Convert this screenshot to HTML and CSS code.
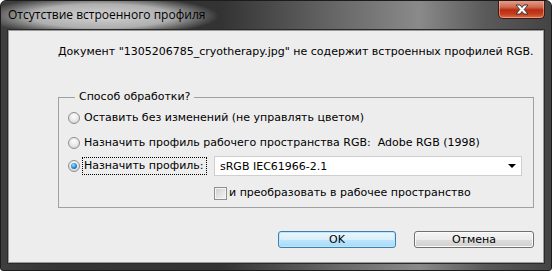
FILE: index.html
```html
<!DOCTYPE html>
<html lang="ru">
<head>
<meta charset="utf-8">
<title>Отсутствие встроенного профиля</title>
<link rel="stylesheet" href="styles.css">
</head>
<body>
<div class="window">
  <div class="titlebar">
    <span class="title">Отсутствие встроенного профиля</span>
    <div class="close">
      <svg width="16" height="11" viewBox="0 0 16 11">
        <path d="M2 1 H6 L8 3.5 L10 1 H14 L10.2 5.5 L14 10 H10 L8 7.5 L6 10 H2 L5.8 5.5 Z" fill="#fff" stroke="#3a3a3a" stroke-width="1" stroke-linejoin="round"/>
      </svg>
    </div>
  </div>
  <div class="client">
    <div class="message">Документ "1305206785_cryotherapy.jpg" не содержит встроенных профилей RGB.</div>
    <fieldset class="group">
      <legend class="legend">Способ обработки?</legend>
      <div class="row"><span class="radio"></span><span class="label">Оставить без изменений (не управлять цветом)</span></div>
      <div class="row row2"><span class="radio"></span><span class="label">Назначить профиль рабочего пространства RGB:&nbsp; Adobe RGB (1998)</span></div>
      <div class="grid row3">
        <div class="row"><span class="radio checked"></span><span class="label focus">Назначить профиль:</span></div>
        <div class="combo"><span class="combo-text">sRGB IEC61966-2.1</span><span class="arrow"></span></div>
      </div>
      <div class="grid checkrow">
        <div></div>
        <div class="row"><span class="check"></span><span class="label">и преобразовать в рабочее пространство</span></div>
      </div>
    </fieldset>
    <div class="buttons">
      <div class="btn default">OK</div>
      <div class="btn">Отмена</div>
    </div>
  </div>
</div>
</body>
</html>
```

FILE: styles.css
```css
html, body {
  margin: 0;
  padding: 0;
  background: #ffffff;
}
.window {
  width: 552px;
  height: 271px;
  box-sizing: border-box;
  border: 1px solid #1c1c1c;
  border-radius: 6px 6px 3px 3px;
  background: linear-gradient(90deg, #3e3e3e 0%, #363636 10%, #333333 40%, #6a6a6a 62%, #8a8a8a 76%, #5a5a5a 88%, #444 100%);
  display: flex;
  flex-direction: column;
  overflow: hidden;
  font-family: "DejaVu Sans", sans-serif;
}
.titlebar {
  height: 29px;
  display: flex;
  justify-content: space-between;
  align-items: flex-start;
  background: radial-gradient(ellipse 118px 20px at 100px 15px, rgba(225,225,225,0.92) 0%, rgba(205,205,205,0.8) 60%, rgba(190,190,190,0) 100%);
}
.title {
  font-family: "Open Sans", "Noto Sans", sans-serif;
  font-size: 12px;
  color: #000;
  margin: 6px 0 0 7px;
  line-height: 16px;
}
.close {
  width: 47px;
  height: 19px;
  box-sizing: border-box;
  margin-right: 6px;
  margin-top: -1px;
  border: 1px solid #3d1a14;
  border-top: none;
  border-radius: 0 0 5px 5px;
  background: linear-gradient(180deg, #e8a592 0%, #d0684f 40%, #b72c10 55%, #c6401f 80%, #e07050 100%);
  box-shadow: inset 0 0 0 1px rgba(255,200,180,0.5);
  display: flex;
  align-items: center;
  justify-content: center;
}
.client {
  flex: 1;
  margin: 0 7px 7px 7px;
  background: #ededed;
  border: 1px solid #9a9a9a;
  box-shadow: 0 0 0 1px #2a2a2a;
  padding: 14px 9px 0 49px;
  font-size: 11px;
  color: #000;
}
.message {
  line-height: 14px;
  height: 14px;
  white-space: nowrap;
}
.group {
  margin: 31px 0 0 0;
  padding: 4px 0 6px 9px;
  border: 1px solid #a0a0a0;
  border-radius: 0;
  min-width: 0;
}
.legend {
  margin-left: 7px;
  padding: 0 4px;
  line-height: 14px;
}
.row {
  display: flex;
  align-items: center;
  height: 20px;
  white-space: nowrap;
}
.row2 {
  margin-top: 5px;
}
.grid {
  display: grid;
  grid-template-columns: 146px 308px;
  align-items: center;
}
.row3 {
  margin-top: 3px;
  height: 20px;
}
.checkrow {
  margin-top: 9px;
}
.checkrow .row {
  height: 16px;
}
.radio {
  width: 12px;
  height: 12px;
  box-sizing: border-box;
  border-radius: 50%;
  border: 1px solid #8e8f8f;
  background: radial-gradient(circle at 50% 35%, #ffffff 0%, #e6e6e6 55%, #c8c8c8 100%);
  margin-right: 4px;
  flex: none;
  display: flex;
  align-items: center;
  justify-content: center;
}
.radio.checked::after {
  content: "";
  width: 6px;
  height: 6px;
  border-radius: 50%;
  background: radial-gradient(circle at 40% 35%, #a8e0ff 0%, #2a8ad4 50%, #0c4c8c 100%);
}
.label {
  line-height: 14px;
}
.focus {
  outline: 1px dotted #000;
  outline-offset: 1px;
  padding-right: 1px;
}
.combo {
  height: 20px;
  box-sizing: border-box;
  border: 1px solid #cfcfcf;
  background: #fff;
  display: flex;
  align-items: center;
  justify-content: space-between;
  padding: 0 5px 0 5px;
}
.arrow {
  width: 0;
  height: 0;
  border-left: 4px solid transparent;
  border-right: 4px solid transparent;
  border-top: 4px solid #000;
}
.check {
  width: 13px;
  height: 13px;
  box-sizing: border-box;
  border: 1px solid #8e8f8f;
  background: linear-gradient(135deg, #cbcbcb 0%, #e6e6e6 60%, #f4f4f4 100%);
  box-shadow: inset 0 0 0 1px #f4f4f4;
  margin-right: 2px;
  flex: none;
}
.buttons {
  display: flex;
  justify-content: flex-end;
  gap: 18px;
  margin-top: 23px;
}
.btn {
  width: 120px;
  height: 17px;
  box-sizing: border-box;
  border: 1px solid #707070;
  border-radius: 3px;
  background: linear-gradient(180deg, #f4f4f4 0%, #ebebeb 50%, #dddddd 51%, #cfcfcf 100%);
  box-shadow: inset 0 0 0 1px #fbfbfb;
  text-align: center;
  line-height: 15px;
  font-size: 11px;
}
.btn.default {
  width: 118px;
  border-color: #3c7fb1;
  background: linear-gradient(180deg, #eaf6fd 0%, #d9f0fc 50%, #bee6fd 51%, #a7d9f5 100%);
  box-shadow: inset 0 0 0 1px #bfe6f8;
}
```
